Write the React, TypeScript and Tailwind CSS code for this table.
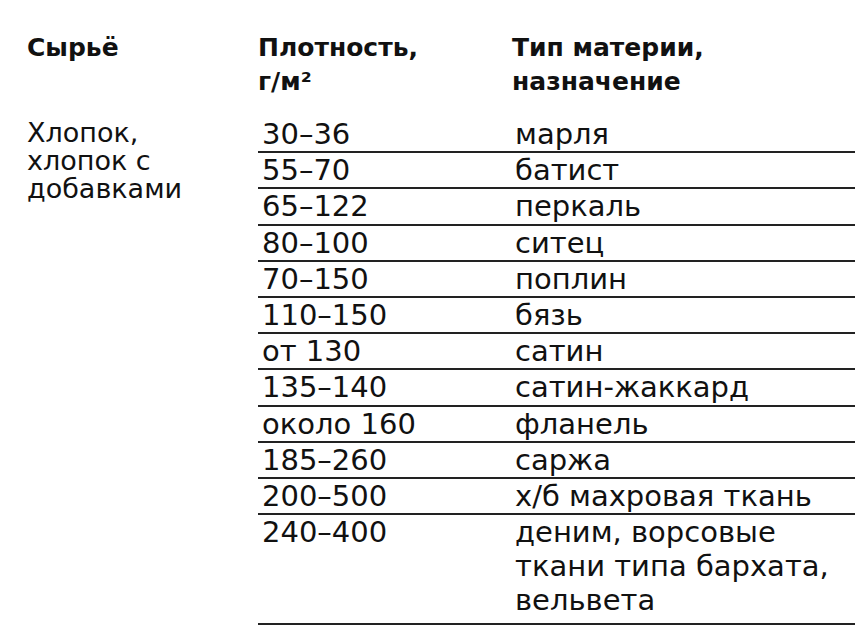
const rows: { d: string; m: string[] }[] = [
  { d: "30–36", m: ["марля"] },
  { d: "55–70", m: ["батист"] },
  { d: "65–122", m: ["перкаль"] },
  { d: "80–100", m: ["ситец"] },
  { d: "70–150", m: ["поплин"] },
  { d: "110–150", m: ["бязь"] },
  { d: "от 130", m: ["сатин"] },
  { d: "135–140", m: ["сатин-жаккард"] },
  { d: "около 160", m: ["фланель"] },
  { d: "185–260", m: ["саржа"] },
  { d: "200–500", m: ["х/б махровая ткань"] },
  { d: "240–400", m: ["деним, ворсовые", "ткани типа бархата,", "вельвета"] },
];

export default function App() {
  return (
    <div
      className="w-[860px] h-[626px] bg-white text-[#111] overflow-hidden"
      style={{ fontFamily: '"DejaVu Sans", sans-serif' }}
    >
      {/* header */}
      <div className="flex pt-[31px] font-bold text-[25px] leading-[34px]">
        <div className="w-[258px] pl-[27px]">Сырьё</div>
        <div className="w-[254px]">
          Плотность,
          <br />
          г/м²
        </div>
        <div>
          Тип материи,
          <br />
          назначение
        </div>
      </div>

      <div className="flex mt-[18px]">
        {/* raw material */}
        <div className="w-[258px] pl-[27px] pt-[2px] text-[27px] leading-[28px]">
          Хлопок,
          <br />
          хлопок с
          <br />
          добавками
        </div>

        {/* table */}
        <div className="w-[597px]">
          {rows.map((r) => {
            const multi = r.m.length > 1;
            return (
              <div
                key={r.d}
                className={
                  multi
                    ? "flex border-b-2 border-[#222] text-[29px] leading-[34px] pb-[6px]"
                    : "flex border-b-2 border-[#222] text-[29px] leading-[34.2px]"
                }
              >
                <div className="w-[257px] pl-[4px]">{r.d}</div>
                <div>
                  {r.m.map((line) => (
                    <div key={line}>{line}</div>
                  ))}
                </div>
              </div>
            );
          })}
        </div>
      </div>
    </div>
  );
}
